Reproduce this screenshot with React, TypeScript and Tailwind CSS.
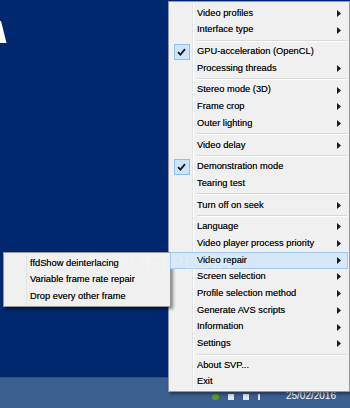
import React from 'react'

type Item =
  | 'sep'
  | { label: string; sub?: boolean; checked?: boolean; active?: boolean }

const mainItems: Item[] = [
  { label: 'Video profiles', sub: true },
  { label: 'Interface type', sub: true },
  'sep',
  { label: 'GPU-acceleration (OpenCL)', checked: true },
  { label: 'Processing threads', sub: true },
  'sep',
  { label: 'Stereo mode (3D)', sub: true },
  { label: 'Frame crop', sub: true },
  { label: 'Outer lighting', sub: true },
  'sep',
  { label: 'Video delay', sub: true },
  'sep',
  { label: 'Demonstration mode', checked: true },
  { label: 'Tearing test' },
  'sep',
  { label: 'Turn off on seek', sub: true },
  'sep',
  { label: 'Language', sub: true },
  { label: 'Video player process priority', sub: true },
  { label: 'Video repair', sub: true, active: true },
  { label: 'Screen selection', sub: true },
  { label: 'Profile selection method', sub: true },
  { label: 'Generate AVS scripts', sub: true },
  { label: 'Information', sub: true },
  { label: 'Settings', sub: true },
  'sep',
  { label: 'About SVP...' },
  { label: 'Exit' },
]

const repairItems = [
  'ffdShow deinterlacing',
  'Variable frame rate repair',
  'Drop every other frame',
]

const Arrow = () => (
  <svg width="4" height="7" viewBox="0 0 4 7" className="shrink-0">
    <polygon points="0,0 4,3.5 0,7" fill="#1a1a1a" />
  </svg>
)

const Check = () => (
  <div className="w-[16px] h-[16px] border border-[#8fc0ea] bg-[#cde4f7] flex items-center justify-center">
    <svg width="9" height="8" viewBox="0 0 9 8">
      <path d="M1 4.2 L3.4 6.6 L8 1.2" stroke="#1a1a1a" strokeWidth="1.8" fill="none" />
    </svg>
  </div>
)

const MenuRow = ({ item }: { item: Exclude<Item, 'sep'> }) => (
  <div
    className={
      item.active
        ? 'relative z-10 flex items-center h-[16.7px] bg-[#d5e7f8] border border-[#9fc9ee] -mx-[1px]'
        : 'relative flex items-center h-[16.7px]'
    }
  >
    <div className="w-[21px] shrink-0 flex items-center justify-center">
      {item.checked && <Check />}
    </div>
    <div className="flex-1 pl-[5px] text-[9.3px] text-[#0d0d0d] leading-none whitespace-nowrap [text-shadow:0_0_0.5px_rgba(0,0,0,0.7)]">
      {item.label}
    </div>
    <div className="w-[10px] flex items-center justify-start">
      {item.sub && <Arrow />}
    </div>
  </div>
)

export default function App() {
  return (
    <div
      className="relative w-[350px] h-[408px] overflow-hidden flex flex-col"
      style={{ fontFamily: '"Liberation Sans", Arial, sans-serif' }}
    >
      {/* desktop */}
      <div className="relative flex-1 bg-[#00286e]">
        <svg width="8" height="50" className="absolute left-0 top-0">
          <polygon points="0,21 1,21 6.5,43 0,43" fill="#ffffff" />
        </svg>
      </div>

      {/* taskbar */}
      <div className="h-[31px] bg-[#3b5f8f] border-t border-[#2f5180] flex justify-end items-end pr-[14px] pb-[7px]">
        <div className="flex items-center gap-[9px] mr-[26px] mb-[1px]">
          <div className="w-[7px] h-[6px] rounded-full bg-[#5a9a2a]" />
          <div className="w-[6px] h-[6px] bg-[#dfe6ee]" />
          <div className="w-[6px] h-[6px] bg-[#dfe6ee]" />
          <div className="w-[2px] h-[6px] bg-[#dfe6ee]" />
        </div>
        <span className="text-[10px] text-white leading-none">25/02/2016</span>
      </div>

      {/* main context menu */}
      <div className="absolute left-[168px] top-[1px] w-[182px] bg-[#f0f0f0] border border-[#979797] pt-[3px] px-[2px] pb-[1px] shadow-[2px_2px_3px_rgba(0,0,0,0.45)]">
        <div className="absolute left-[23px] top-[2px] bottom-[2px] w-[1px] bg-[#e2e3e3]" />
        <div className="absolute left-[24px] top-[2px] bottom-[2px] w-[1px] bg-white" />
        {mainItems.map((item, i) =>
          item === 'sep' ? (
            <div key={i} className="h-[5px] flex items-center pl-[26px]">
              <div className="w-full h-[2px] border-t border-[#d7d7d7] bg-white" />
            </div>
          ) : (
            <MenuRow key={i} item={item} />
          )
        )}
      </div>

      {/* Video repair submenu */}
      <div className="absolute left-[3px] top-[252px] w-[168px] bg-[#f0f0f0] border border-[#979797] pt-[2px] px-[1px] pb-[1px] shadow-[2px_2px_3px_rgba(0,0,0,0.45)]">
        <div className="absolute left-[22px] top-[1px] bottom-[1px] w-[1px] bg-[#e2e3e3]" />
        {repairItems.map((t) => (
          <div key={t} className="relative flex items-center h-[16.7px]">
            <div className="w-[25px] shrink-0" />
            <div className="text-[9.3px] text-[#0d0d0d] leading-none whitespace-nowrap [text-shadow:0_0_0.5px_rgba(0,0,0,0.7)]">
              {t}
            </div>
          </div>
        ))}
      </div>

      {/* watermark */}
      <div className="absolute left-[116px] top-[251px] z-20 text-[21px] font-bold leading-none text-white/20 tracking-tight pointer-events-none">
        SOFTPEDIA
      </div>
    </div>
  )
}
